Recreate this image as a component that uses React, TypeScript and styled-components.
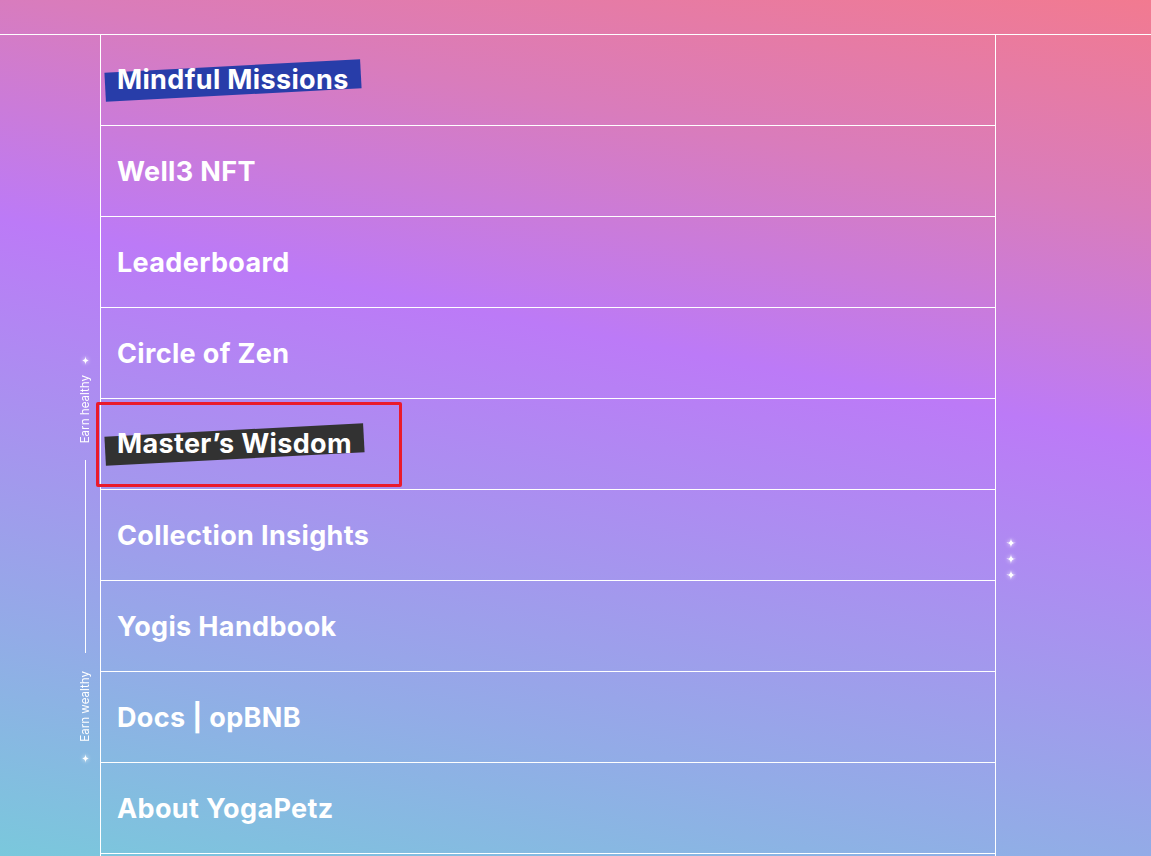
import React from "react";
import styled, { createGlobalStyle } from "styled-components";

const GlobalStyle = createGlobalStyle`
  html, body {
    margin: 0;
    padding: 0;
  }
  body {
    font-family: "Inter", "Noto Sans", sans-serif;
    color: #fff;
  }
  * {
    box-sizing: border-box;
  }
`;

const Page = styled.div`
  width: 100%;
  height: 856px;
  overflow: hidden;
  display: flex;
  flex-direction: column;
  background: linear-gradient(
    191deg,
    #f27a90 0%,
    #d97cbc 20%,
    #bc7af7 41%,
    #93abe7 79%,
    #7ac8dc 100%
  );
`;

const Header = styled.header`
  height: 35px;
  flex-shrink: 0;
  border-bottom: 1px solid #fff;
`;

const Body = styled.div`
  flex: 1;
  display: grid;
  grid-template-columns: 101px 895px 1fr;
`;

const Side = styled.aside`
  border-right: 1px solid #fff;
  display: flex;
  justify-content: flex-end;
`;

const Tagline = styled.div`
  width: 30px;
  padding-top: 321px;
  display: flex;
  flex-direction: column;
  align-items: center;
`;

const VerticalText = styled.span<{ $m: string }>`
  writing-mode: vertical-rl;
  transform: rotate(180deg);
  font-size: 11.6px;
  line-height: 12px;
  white-space: nowrap;
  margin: ${(p) => p.$m};
`;

const Rule = styled.div`
  width: 1px;
  height: 193px;
  background: #fff;
`;

const Menu = styled.nav`
  border-right: 1px solid #fff;
  display: flex;
  flex-direction: column;
`;

const Row = styled.a`
  position: relative;
  height: 91px;
  flex-shrink: 0;
  border-bottom: 1px solid #fff;
  display: flex;
  align-items: center;
  padding-left: 16px;
  color: #fff;
  text-decoration: none;
  font-weight: 700;
  font-size: 27px;
  letter-spacing: 0.35px;
`;

const Highlight = styled.span<{ $bg: string }>`
  display: inline-flex;
  align-items: center;
  height: 29px;
  padding: 0 12px;
  margin-left: -12px;
  margin-top: 1px;
  background: ${(p) => p.$bg};
  transform: rotate(-3deg);
`;

const Label = styled.span`
  display: inline-block;
  line-height: 29px;
`;

const Straight = styled(Label)`
  transform: rotate(3deg);
  margin-top: -2px;
`;

const Marker = styled.span`
  position: absolute;
  left: -5px;
  top: 3px;
  width: 306px;
  height: 85px;
  border: 3px solid #ea1a2b;
  border-radius: 2px;
  pointer-events: none;
`;

const RightCol = styled.div`
  display: flex;
  flex-direction: column;
  align-items: flex-start;
  gap: 6px;
  padding: 503px 0 0 10px;
`;

const Glow = styled.svg`
  display: block;
  filter: drop-shadow(0 0 2px rgba(255, 255, 255, 0.9));
`;

function Sparkle({ size = 10 }: { size?: number }) {
  return (
    <Glow width={size} height={size} viewBox="0 0 10 10">
      <path
        d="M5 0 C5.2 3.6 6.4 4.8 10 5 C6.4 5.2 5.2 6.4 5 10 C4.8 6.4 3.6 5.2 0 5 C3.6 4.8 4.8 3.6 5 0Z"
        fill="#fff"
      />
    </Glow>
  );
}

const items = [
  { label: "Mindful Missions", bg: "#283da9" },
  { label: "Well3 NFT" },
  { label: "Leaderboard" },
  { label: "Circle of Zen" },
  { label: "Master\u2019s Wisdom", bg: "#323232", marked: true },
  { label: "Collection Insights" },
  { label: "Yogis Handbook" },
  { label: "Docs | opBNB" },
  { label: "About YogaPetz" },
];

export default function App() {
  return (
    <>
      <GlobalStyle />
      <Page>
        <Header />
        <Body>
          <Side>
            <Tagline>
              <Sparkle size={9} />
              <VerticalText $m="10px 0 17px">Earn healthy</VerticalText>
              <Rule />
              <VerticalText $m="18px 0 12px">Earn wealthy</VerticalText>
              <Sparkle size={9} />
            </Tagline>
          </Side>
          <Menu>
            {items.map((item) => (
              <Row key={item.label} href="#">
                {item.bg ? (
                  <Highlight $bg={item.bg}>
                    <Straight>{item.label}</Straight>
                  </Highlight>
                ) : (
                  <Label>{item.label}</Label>
                )}
                {item.marked && <Marker />}
              </Row>
            ))}
          </Menu>
          <RightCol>
            <Sparkle />
            <Sparkle />
            <Sparkle />
          </RightCol>
        </Body>
      </Page>
    </>
  );
}
